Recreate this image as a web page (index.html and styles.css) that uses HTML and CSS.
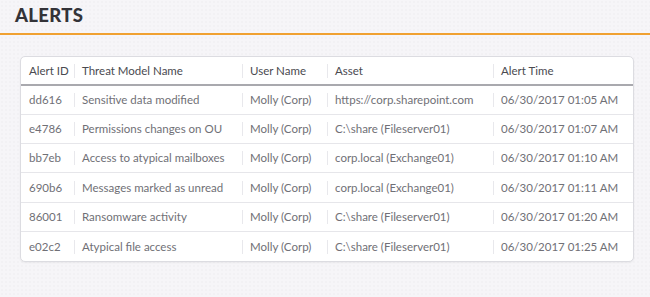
FILE: index.html
```html
<!DOCTYPE html>
<html lang="en">
  <head>
    <meta charset="UTF-8" />
    <title>Alerts</title>
    <link rel="stylesheet" href="styles.css">
  </head>
  <body>
    <header class="page-header">
      <h1>ALERTS</h1>
    </header>

    <div class="card">
      <table class="alerts">
        <thead>
          <tr>
            <th class="col-id"><span>Alert ID</span></th>
            <th class="col-name"><span>Threat Model Name</span></th>
            <th class="col-user"><span>User Name</span></th>
            <th class="col-asset"><span>Asset</span></th>
            <th class="col-time"><span>Alert Time</span></th>
          </tr>
        </thead>
        <tbody>
          <tr>
            <td><span>dd616</span></td>
            <td><span>Sensitive data modified</span></td>
            <td><span>Molly (Corp)</span></td>
            <td><span>https://corp.sharepoint.com</span></td>
            <td><span>06/30/2017 01:05 AM</span></td>
          </tr>
          <tr>
            <td><span>e4786</span></td>
            <td><span>Permissions changes on OU</span></td>
            <td><span>Molly (Corp)</span></td>
            <td><span>C:\share (Fileserver01)</span></td>
            <td><span>06/30/2017 01:07 AM</span></td>
          </tr>
          <tr>
            <td><span>bb7eb</span></td>
            <td><span>Access to atypical mailboxes</span></td>
            <td><span>Molly (Corp)</span></td>
            <td><span>corp.local (Exchange01)</span></td>
            <td><span>06/30/2017 01:10 AM</span></td>
          </tr>
          <tr>
            <td><span>690b6</span></td>
            <td><span>Messages marked as unread</span></td>
            <td><span>Molly (Corp)</span></td>
            <td><span>corp.local (Exchange01)</span></td>
            <td><span>06/30/2017 01:11 AM</span></td>
          </tr>
          <tr>
            <td><span>86001</span></td>
            <td><span>Ransomware activity</span></td>
            <td><span>Molly (Corp)</span></td>
            <td><span>C:\share (Fileserver01)</span></td>
            <td><span>06/30/2017 01:20 AM</span></td>
          </tr>
          <tr>
            <td><span>e02c2</span></td>
            <td><span>Atypical file access</span></td>
            <td><span>Molly (Corp)</span></td>
            <td><span>C:\share (Fileserver01)</span></td>
            <td><span>06/30/2017 01:25 AM</span></td>
          </tr>
        </tbody>
      </table>
    </div>
  </body>
</html>
```

FILE: styles.css
```css
:root {
  --accent: #f0a131;
  --text: #333338;
  --text-head: #4a4a50;
  --text-cell: #707076;
  --line: #e6e6ea;
  --divider: #e8e8ec;
  --background: #f6f5f8;
}

* {
  margin: 0;
  padding: 0;
  box-sizing: border-box;
}

body {
  font-family: 'Lato', 'Liberation Sans', sans-serif;
  background-color: var(--background);
  background-image: radial-gradient(rgba(0, 0, 0, 0.035) 0.6px, transparent 0.8px);
  background-size: 4px 4px;
  color: var(--text);
  width: 650px;
  height: 297px;
  overflow: hidden;
}

.page-header {
  height: 35px;
  padding: 4px 0 0 15px;
  border-bottom: 2px solid var(--accent);
}

h1 {
  font-size: 18.5px;
  font-weight: 900;
  line-height: 22px;
  letter-spacing: 0.3px;
  color: var(--text);
}

.card {
  margin: 21px 16px 0 20px;
  background-color: #fff;
  border: 1px solid #dcdce1;
  border-radius: 5px;
  box-shadow: 0 1px 2px rgba(0, 0, 0, 0.05);
  overflow: hidden;
}

.alerts {
  width: 100%;
  border-collapse: collapse;
  table-layout: fixed;
  font-size: 11.5px;
}

.col-id { width: 53px; }
.col-name { width: 168px; }
.col-user { width: 85px; }
.col-asset { width: 166px; }

th,
td {
  text-align: left;
  white-space: nowrap;
  padding: 0;
}

th span,
td span {
  display: block;
  padding-left: 8px;
  line-height: 14px;
}

th + th span,
td + td span {
  border-left: 1px solid var(--divider);
  padding-left: 7px;
}

th {
  height: 28px;
  font-weight: 400;
  color: var(--text-head);
  border-bottom: 2px solid #a9a9ae;
}

td {
  height: 29.33px;
  color: var(--text-cell);
  border-bottom: 1px solid var(--line);
}

tbody tr:last-child td {
  border-bottom: none;
}
```
